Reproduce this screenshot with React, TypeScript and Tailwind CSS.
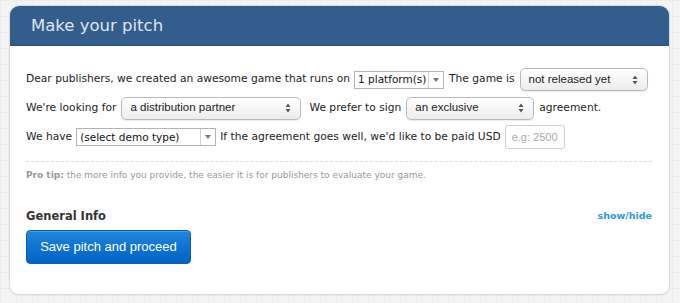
const body = '"DejaVu Sans", "Liberation Sans", sans-serif';

function UpDown() {
  return (
    <svg width="6" height="10" viewBox="0 0 6 10" className="shrink-0">
      <path d="M3 0.5 L5.5 4 H0.5 Z" fill="#555" />
      <path d="M3 9.5 L5.5 6 H0.5 Z" fill="#555" />
    </svg>
  );
}

function RoundSelect({ label, width }: { label: string; width: string }) {
  return (
    <div
      className={`${width} shrink-0 h-[23px] flex items-center justify-between pl-[8px] pr-[9px] rounded-[5px] border border-[#b9b9b9] bg-[linear-gradient(#ffffff,#ececec)] shadow-[0_1px_1px_rgba(0,0,0,0.08)] text-[11.5px] text-[#222] whitespace-nowrap`}
      style={{ fontFamily: '"Liberation Sans", Arial, sans-serif' }}
    >
      <span>{label}</span>
      <UpDown />
    </div>
  );
}

function BoxSelect({ label, width }: { label: string; width: string }) {
  return (
    <div className={`${width} shrink-0 h-[18px] flex items-stretch border border-[#b4b4b4] bg-white text-[10.5px] text-[#111] whitespace-nowrap`}>
      <span className="flex-1 flex items-center pl-[3px] leading-none overflow-hidden">{label}</span>
      <span className="w-[15px] shrink-0 flex items-center justify-center border-l border-[#d2d2d2]">
        <svg width="6" height="4" viewBox="0 0 6 4">
          <path d="M0 0 H6 L3 4 Z" fill="#777" />
        </svg>
      </span>
    </div>
  );
}

export default function App() {
  return (
    <div
      className="w-[680px] h-[303px] pt-[5px] pl-[9px] pr-[10px] bg-[#f4f4f4] bg-[linear-gradient(#ececec_1px,transparent_1px),linear-gradient(90deg,#ececec_1px,transparent_1px)] bg-[size:16px_16px]"
      style={{ fontFamily: body }}
    >
      <div className="h-[290px] rounded-[10px] border border-[#d9d9d9] bg-white shadow-[0_1px_2px_rgba(0,0,0,0.06)] overflow-hidden">
        <div className="h-[40px] bg-[#335d8c] flex items-center pl-[21px] border-b border-[#2c5381]">
          <h1 className="text-[16.5px] text-[#dfe6ee] pt-[2px]">Make your pitch</h1>
        </div>

        <div className="pl-[16px] pr-[17px] pt-[22px] text-[10.7px] text-[#222] whitespace-nowrap">
          <div className="flex flex-col gap-[6px]">
            <div className="flex items-center gap-[4px] h-[23px]">
              <span>Dear publishers, we created an awesome game that runs on</span>
              <BoxSelect label="1 platform(s)" width="w-[90px]" />
              <span className="ml-[1px]">The game is</span>
              <RoundSelect label="not released yet" width="w-[128px] ml-[1px]" />
            </div>
            <div className="flex items-center gap-[5px] h-[22px]">
              <span>We're looking for</span>
              <RoundSelect label="a distribution partner" width="w-[180px]" />
              <span className="ml-[3px]">We prefer to sign</span>
              <RoundSelect label="an exclusive" width="w-[128px]" />
              <span>agreement.</span>
            </div>
            <div className="flex items-center gap-[4px] h-[24px]">
              <span>We have</span>
              <BoxSelect label="(select demo type)" width="w-[140px]" />
              <span>If the agreement goes well, we'd like to be paid USD</span>
              <div
                className="w-[60px] h-[24px] flex items-center pl-[6px] rounded-[3px] border border-[#d0d0d0] bg-white text-[11px] text-[#aaa]"
                style={{ fontFamily: '"Liberation Sans", Arial, sans-serif' }}
              >
                e.g: 2500
              </div>
            </div>
          </div>

          <div className="mt-[12px] border-t border-dashed border-[#dcdcdc]" />
          <p className="mt-[7px] text-[9px] text-[#999]">
            <span className="font-bold">Pro tip:</span> the more info you provide, the easier it is for publishers to evaluate your game.
          </p>

          <div className="mt-[25px] flex items-center justify-between">
            <h2 className="text-[11.5px] font-bold text-[#333]">General Info</h2>
            <a className="text-[9.5px] font-bold text-[#2b9ad6]">show/hide</a>
          </div>

          <button
            className="mt-[5px] w-[165px] h-[34px] rounded-[4px] border border-[#0a5fb8] bg-[linear-gradient(#1f86dc,#0062c4)] text-white text-[13px] shadow-[inset_0_1px_0_rgba(255,255,255,0.2)]"
            style={{ fontFamily: '"Liberation Sans", Arial, sans-serif' }}
          >
            Save pitch and proceed
          </button>
        </div>
      </div>
    </div>
  );
}
